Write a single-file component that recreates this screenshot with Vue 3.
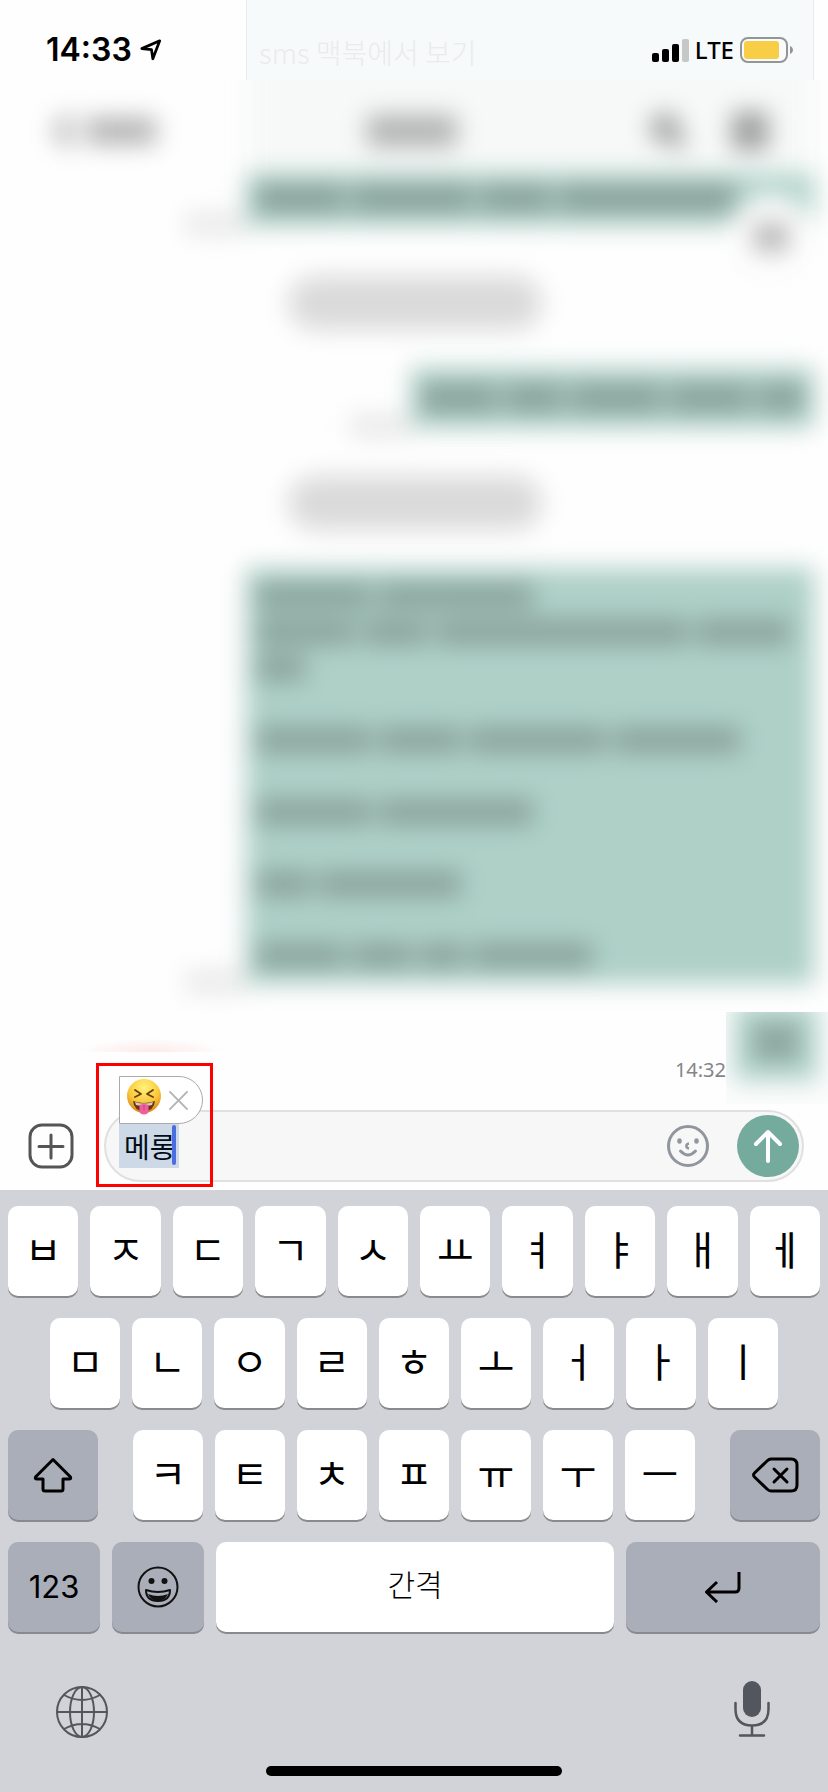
<script setup>
import { ref } from 'vue'

const draft = ref('메롱')

const rowOne = ['ㅂ', 'ㅈ', 'ㄷ', 'ㄱ', 'ㅅ', 'ㅛ', 'ㅕ', 'ㅑ', 'ㅐ', 'ㅔ']
const rowTwo = ['ㅁ', 'ㄴ', 'ㅇ', 'ㄹ', 'ㅎ', 'ㅗ', 'ㅓ', 'ㅏ', 'ㅣ']
const rowThree = ['ㅋ', 'ㅌ', 'ㅊ', 'ㅍ', 'ㅠ', 'ㅜ', 'ㅡ']

// Word lengths of each obscured line, as a percentage of the bubble's text width.
const firstMessage = [[16, 22, 13, 32]]
const shortMessage = [[20, 15, 24, 21, 12]]
const longMessage = [
  [21, 28],
  [18, 12, 46, 17],
  [9],
  [],
  [21, 15, 25, 23],
  [],
  [21, 28],
  [],
  [10, 26],
  [],
  [16, 11, 8, 22],
]
</script>

<template>
  <main class="phone">
    <div class="status-sheet"></div>
    <header class="status">
      <div class="clock">
        <span class="time">14:33</span>
        <svg class="locate" viewBox="0 0 24 24" aria-hidden="true">
          <path d="M2 10.500 21.500 2 14 21.500 12.500 11.500Z" fill="none" stroke="#000" stroke-width="3" stroke-linejoin="round" />
        </svg>
      </div>
      <p class="ghost-text">sms 맥북에서 보기</p>
      <div class="signals">
        <svg class="bars" viewBox="0 0 37 24" aria-hidden="true">
          <rect x="0" y="15" width="7" height="9" rx="2" />
          <rect x="10" y="11" width="7" height="13" rx="2" />
          <rect x="20" y="6" width="7" height="18" rx="2" />
          <rect x="30" y="1" width="7" height="23" rx="2" fill="#c6c8c8" />
        </svg>
        <span class="lte">LTE</span>
        <svg class="battery" viewBox="0 0 54 26" aria-hidden="true">
          <rect x="1" y="1" width="46" height="24" rx="7" fill="#fafcfc" stroke="#939596" stroke-width="2" />
          <rect x="4" y="4" width="35" height="18" rx="3" fill="#f8ce46" />
          <path d="M50 9c4 2 4 6 0 8Z" fill="#939596" />
        </svg>
      </div>
    </header>

    <section class="history" aria-hidden="true">
      <div class="soft">
        <div class="nav">
          <div class="nav-sheet"></div>
          <div class="back">
            <svg viewBox="0 0 20 36"><path d="M17 3 4 18l13 15" fill="none" stroke="#555" stroke-width="5" /></svg>
            <i></i>
          </div>
          <i class="title"></i>
          <div class="tools">
            <svg viewBox="0 0 40 40"><circle cx="17" cy="17" r="11" fill="#ccc" stroke="#777" stroke-width="6" /><path d="m25 25 11 12" stroke="#777" stroke-width="7" /></svg>
            <svg viewBox="0 0 40 40"><path d="M2 7h36M2 20h36M2 33h36" stroke="#666" stroke-width="8" /></svg>
          </div>
        </div>

        <div class="message first">
          <i class="stamp"></i>
          <div class="bubble wide">
            <div v-for="(line, n) in firstMessage" :key="n" class="line">
              <i v-for="(w, m) in line" :key="m" :style="{ width: w + '%' }"></i>
            </div>
          </div>
          <div class="jump"><i></i></div>
        </div>
        <div class="pill"></div>
        <div class="message short">
          <i class="stamp"></i>
          <div class="bubble medium">
            <div v-for="(line, n) in shortMessage" :key="n" class="line">
              <i v-for="(w, m) in line" :key="m" :style="{ width: w + '%' }"></i>
            </div>
          </div>
        </div>
        <div class="pill"></div>
        <div class="message">
          <i class="stamp"></i>
          <div class="bubble wide">
            <div v-for="(line, n) in longMessage" :key="n" class="line">
              <i v-for="(w, m) in line" :key="m" :style="{ width: w + '%' }"></i>
            </div>
          </div>
        </div>
      </div>
    </section>

    <section class="latest">
      <div class="glow"></div>
      <time class="sent-at">14:32</time>
      <div class="patch" aria-hidden="true">
        <div class="mini"><i></i></div>
      </div>
    </section>

    <form class="composer" @submit.prevent>
      <button type="button" class="plus" aria-label="첨부">
        <svg viewBox="0 0 46 46">
          <rect x="2" y="2" width="42" height="42" rx="12" fill="none" stroke="#555" stroke-width="3" />
          <path d="M23 12v23M11 23.500h24" stroke="#555" stroke-width="3" stroke-linecap="round" />
        </svg>
      </button>
      <div class="field">
        <div class="entry">
          <span class="marked"></span>
          <input v-model="draft" type="text" aria-label="메시지 입력" />
          <span class="caret"></span>
          <div class="suggest">
            <button type="button" aria-label="이모티콘 넣기">
              <svg class="tongue" viewBox="0 0 36 38">
                <defs>
                  <radialGradient id="face" cx="50%" cy="25%" r="75%">
                    <stop offset="0" stop-color="#fff27a" />
                    <stop offset="0.600" stop-color="#f9c93c" />
                    <stop offset="1" stop-color="#dd8518" />
                  </radialGradient>
                </defs>
                <circle cx="18" cy="18" r="17" fill="url(#face)" />
                <path d="M9 12l6 4-6 3M27 12l-6 4 6 3" fill="none" stroke="#6b3d0c" stroke-width="1.800" stroke-linecap="round" stroke-linejoin="round" />
                <path d="M7 23q11 4 22 0-1 10-11 10T7 23Z" fill="#6a3512" />
                <path d="M9 24q9 3 18 0l-1 3q-8 2-16 0Z" fill="#fff" opacity="0.750" />
                <path d="M13.500 27q4.500-2 9 0v5q0 4.500-4.500 4.500T13.500 32Z" fill="#ee5fa0" />
                <path d="M18 27v5" stroke="#c93c7d" stroke-width="1" />
              </svg>
            </button>
            <button type="button" aria-label="닫기">
              <svg class="close" viewBox="0 0 22 22"><path d="m1.500 1.500 19 19m0-19-19 19" stroke="#b4b4b4" stroke-width="2" /></svg>
            </button>
          </div>
        </div>
        <button type="button" class="sticker" aria-label="이모티콘">
          <svg viewBox="0 0 42 42" fill="none" stroke="#91969e">
            <circle cx="21" cy="21" r="19.500" stroke-width="3" />
            <rect x="11" y="14" width="3" height="4" rx="1.500" stroke-width="1.500" fill="#91969e" />
            <rect x="28" y="14" width="3" height="4" rx="1.500" stroke-width="1.500" fill="#91969e" />
            <path d="M22 18.500c-3.500.5-3.500 4.500 0 5" stroke-width="2.500" />
            <path d="M13.500 26q7.500 8 15 0" stroke-width="3" stroke-linecap="round" />
          </svg>
        </button>
        <button type="submit" class="send" aria-label="보내기">
          <svg viewBox="0 0 30 34"><path d="M15 32V3M3 15 15 3l12 12" fill="none" stroke="#fff" stroke-width="4" stroke-linecap="round" stroke-linejoin="round" /></svg>
        </button>
      </div>
      <div class="callout"></div>
    </form>

    <section class="keyboard">
      <div class="keys">
        <div class="row"><button v-for="k in rowOne" :key="k" type="button" class="key">{{ k }}</button></div>
        <div class="row inset"><button v-for="k in rowTwo" :key="k" type="button" class="key">{{ k }}</button></div>
        <div class="row split">
          <button type="button" class="key grey side" aria-label="shift">
            <svg class="shift" viewBox="0 0 40 36"><path d="M20 2.500 37.500 20q.8 2-1.500 2h-6v10q0 2-2 2H12q-2 0-2-2V22H4q-2.300 0-1.500-2Z" fill="none" stroke="#000" stroke-width="3" stroke-linejoin="round" /></svg>
          </button>
          <div class="row letters"><button v-for="k in rowThree" :key="k" type="button" class="key">{{ k }}</button></div>
          <button type="button" class="key grey side" aria-label="지우기">
            <svg class="erase" viewBox="0 0 48 36" fill="none" stroke="#000" stroke-width="3" stroke-linecap="round" stroke-linejoin="round">
              <path d="M20 2h20q6 0 6 6v20q0 6-6 6H20q-2 0-4-2L3.500 20q-2-2 0-4L16 4q2-2 4-2Z" />
              <path d="m23 12 13 13m0-13L23 25" />
            </svg>
          </button>
        </div>
        <div class="row">
          <button type="button" class="key grey mode">123</button>
          <button type="button" class="key grey mode" aria-label="이모지">
            <svg class="grin" viewBox="0 0 42 42">
              <circle cx="21" cy="21" r="19.500" fill="none" stroke="#111" stroke-width="2" />
              <circle cx="14.500" cy="15" r="3" fill="#111" />
              <circle cx="27.500" cy="15" r="3" fill="#111" />
              <path d="M9 24q12 4 24 0 0 11-12 11T9 24Z" fill="#aaaeb9" stroke="#111" stroke-width="2" stroke-linejoin="round" />
              <path d="M11 28q10 4 20 0-3 7-10 7t-10-7Z" fill="#111" />
            </svg>
          </button>
          <button type="button" class="key space">간격</button>
          <button type="button" class="key grey enter" aria-label="줄바꿈">
            <svg class="return" viewBox="0 0 38 32"><path d="M35 1v16q0 4-4 4H3M13 11 2.500 21 13 31" fill="none" stroke="#000" stroke-width="3" stroke-linejoin="round" /></svg>
          </button>
        </div>
      </div>
      <div class="dock">
        <button type="button" aria-label="키보드 전환">
          <svg class="globe" viewBox="0 0 52 52" fill="none" stroke="#54565b" stroke-width="2">
            <circle cx="26" cy="26" r="25" />
            <ellipse cx="26" cy="26" rx="12" ry="25" />
            <path d="M26 1v50M1 26h50M8 9q18 10 36 0M8 43q18-10 36 0" />
          </svg>
        </button>
        <button type="button" aria-label="음성 입력">
          <svg class="mic" viewBox="0 0 36 56">
            <rect x="9" y="0" width="18" height="36" rx="9" fill="#54565d" />
            <path d="M1.500 22v6q0 16.500 16.500 16.500T34.500 28v-6M18 45v9M6 54.500h24" fill="none" stroke="#54565b" stroke-width="2.500" stroke-linecap="round" />
          </svg>
        </button>
      </div>
      <div class="home"></div>
    </section>
  </main>
</template>

<style>
body {
  margin: 0;
  background: #d1d3d9;
}
</style>

<style scoped>
* {
  box-sizing: border-box;
}
.phone {
  position: relative;
  background: #fefefe;
  font-family: Inter, 'Noto Sans CJK KR', sans-serif;
  color: #000;
}
button {
  padding: 0;
  border: 0;
  background: none;
  color: inherit;
  font: inherit;
}
svg {
  display: block;
}
i {
  display: block;
}

/* Status bar */
.status-sheet {
  position: absolute;
  top: 0;
  right: 14px;
  width: calc(100% - 260px);
  height: 80px;
  border: solid #e9ebed;
  border-width: 0 1px;
  background: #f6fafb;
}
.status {
  position: relative;
  display: flex;
  align-items: center;
  height: 80px;
  padding: 20px 34px 0 46px;
}
.clock {
  display: flex;
  align-items: center;
  gap: 8px;
  width: 213px;
}
.time {
  font-size: 32px;
  font-weight: 600;
  line-height: 40px;
}
.locate {
  width: 22px;
  height: 22px;
}
.ghost-text {
  flex: 1;
  margin: 0;
  padding-top: 4px;
  color: #ebebeb;
  font-family: 'Noto Sans CJK KR', sans-serif;
  font-size: 28px;
  font-weight: 300;
  line-height: 40px;
}
.signals {
  display: flex;
  align-items: center;
  gap: 6px;
}
.bars {
  width: 37px;
  height: 24px;
}
.lte {
  font-family: 'Noto Sans', sans-serif;
  font-size: 24px;
  font-weight: 500;
  line-height: 32px;
}
.battery {
  width: 54px;
  height: 26px;
}

/* Obscured conversation */
.history {
  height: 932px;
  overflow: hidden;
}
.soft {
  display: flex;
  flex-direction: column;
  filter: blur(12px);
}
.nav {
  position: relative;
  display: flex;
  align-items: center;
  justify-content: space-between;
  height: 94px;
  padding: 8px 58px 0 54px;
}
.nav-sheet {
  position: absolute;
  top: -40px;
  right: 14px;
  bottom: 0;
  width: calc(100% - 260px);
  background: #f6f9f8;
}
.back {
  position: relative;
  display: flex;
  flex: 1;
  align-items: center;
  gap: 12px;
}
.back svg {
  width: 20px;
  height: 36px;
}
.back i {
  width: 70px;
  height: 26px;
  background: #b0b0b0;
}
.title {
  position: relative;
  width: 90px;
  height: 32px;
  background: #b2b3b3;
}
.tools {
  position: relative;
  display: flex;
  flex: 1;
  justify-content: flex-end;
  gap: 42px;
}
.tools svg {
  width: 40px;
  height: 40px;
}
.message {
  position: relative;
  display: flex;
  align-items: flex-end;
  justify-content: flex-end;
  padding-right: 14px;
}
.stamp {
  width: 60px;
  height: 20px;
  margin-bottom: -8px;
  background: #e6e6e6;
}
.bubble {
  padding: 10px;
  background: #aed0c7;
}
.wide {
  width: calc(100% - 246px);
}
.medium {
  width: calc(100% - 411px);
}
.line {
  display: flex;
  align-items: center;
  gap: 8px;
  height: 36px;
}
.line i {
  height: 26px;
  background: #8aa39c;
}
.first {
  margin-bottom: 50px;
}
.first .bubble {
  padding: 6px 10px 10px;
}
.first .line i,
.short .line i {
  height: 30px;
}
.short {
  margin-bottom: 48px;
}
.short .bubble {
  padding: 12px 10px;
}
.jump {
  position: absolute;
  top: 20px;
  right: 14px;
  display: grid;
  place-items: center;
  width: 86px;
  height: 86px;
  border-radius: 50%;
  background: #fcfcfc;
}
.jump i {
  width: 34px;
  height: 28px;
  background: #b4b4b4;
}
.pill {
  width: 254px;
  height: 54px;
  margin-bottom: 38px;
  margin-left: calc(35% - 2px);
  border-radius: 27px;
  background: #dadada;
}

/* Latest message */
.latest {
  position: relative;
  display: flex;
  align-items: center;
  justify-content: flex-end;
  height: 92px;
}
.glow {
  position: absolute;
  bottom: 52px;
  left: 76px;
  width: 150px;
  height: 14px;
  background: radial-gradient(ellipse at 50% 100%, #fdeaea, #fefefe00 70%);
}
.sent-at {
  padding-top: 24px;
  color: #858585;
  font-family: 'Noto Sans', sans-serif;
  font-size: 20px;
  line-height: 28px;
}
.patch {
  width: 102px;
  height: 92px;
  overflow: hidden;
  background: #fbfcfc;
}
.mini {
  display: grid;
  place-items: center;
  width: 82px;
  height: 76px;
  margin-top: -8px;
  margin-left: 9px;
  background: #aed0c7;
  filter: blur(12px);
}
.mini i {
  width: 44px;
  height: 34px;
  background: #8ba49c;
}

/* Composer */
.composer {
  position: relative;
  display: flex;
  align-items: center;
  gap: 30px;
  padding: 6px 24px 8px 28px;
  background: #fefefe;
}
.plus svg {
  width: 46px;
  height: 46px;
}
.field {
  display: flex;
  flex: 1;
  align-items: center;
  height: 72px;
  padding: 0 3px 0 13px;
  border: 2px solid #e0e0e0;
  border-radius: 36px;
  background: #f7f7f7;
}
.entry {
  position: relative;
  flex: 1;
}
.marked {
  position: absolute;
  top: 0;
  left: 0;
  width: 60px;
  height: 44px;
  background: #cdd9e7;
}
.entry input {
  position: relative;
  display: block;
  width: 100%;
  height: 44px;
  padding: 0 0 0 5px;
  border: 0;
  outline: 0;
  background: transparent;
  color: #020d1a;
  font-family: 'Noto Sans CJK KR', sans-serif;
  font-size: 28px;
}
.caret {
  position: absolute;
  top: 1px;
  left: 53px;
  width: 4px;
  height: 40px;
  border-radius: 2px;
  background: #4a6de0;
}
.suggest {
  position: absolute;
  bottom: 44px;
  left: 0;
  display: flex;
  gap: 6px;
  width: 84px;
  height: 48px;
  padding: 1px 0 0 6px;
  border: 1px solid #aaa;
  border-radius: 0 24px 24px 0;
  background: #fff;
}
.suggest button {
  display: flex;
}
.tongue {
  width: 36px;
  height: 38px;
}
.close {
  width: 21px;
  height: 21px;
  margin-top: 12px;
}
.sticker svg {
  width: 42px;
  height: 42px;
}
.send {
  display: grid;
  place-items: center;
  width: 62px;
  height: 62px;
  margin-left: 28px;
  border-radius: 50%;
  background: #75ab9d;
}
.send svg {
  width: 30px;
  height: 34px;
}
.callout {
  position: absolute;
  bottom: 3px;
  left: 96px;
  width: 117px;
  height: 124px;
  border: 3px solid #f00;
  pointer-events: none;
}

/* Keyboard */
.keyboard {
  padding: 16px 8px;
  background: #d1d3d9;
}
.keys {
  display: flex;
  flex-direction: column;
  gap: 22px;
}
.row {
  display: flex;
  gap: 12px;
}
.inset {
  padding: 0 42px;
}
.split {
  gap: 35px;
}
.letters {
  flex: 1;
}
.key {
  display: flex;
  flex: 1;
  align-items: center;
  justify-content: center;
  min-width: 0;
  height: 90px;
  padding-bottom: 6px;
  border-radius: 10px;
  background: #fff;
  box-shadow: 0 2px 0 #898a8d;
  font-family: 'Noto Sans CJK KR', sans-serif;
  font-size: 40px;
  font-weight: 400;
  line-height: 44px;
}
.grey {
  padding-bottom: 0;
  background: #aaaeb9;
}
.side {
  flex: 0 0 90px;
}
.mode {
  flex: 0 0 92px;
  font-family: Inter, sans-serif;
  font-size: 31px;
}
.space {
  padding-bottom: 8px;
  font-size: 30px;
  font-weight: 300;
}
.enter {
  flex: 0 0 194px;
}
.shift {
  width: 40px;
  height: 36px;
}
.erase {
  width: 48px;
  height: 36px;
}
.grin {
  width: 42px;
  height: 42px;
}
.return {
  width: 38px;
  height: 32px;
}
.dock {
  display: flex;
  align-items: flex-end;
  justify-content: space-between;
  padding: 48px 50px 28px 48px;
}
.globe {
  width: 52px;
  height: 52px;
}
.mic {
  width: 36px;
  height: 58px;
}
.home {
  width: 296px;
  height: 10px;
  margin: 0 auto;
  border-radius: 5px;
  background: #000;
}
</style>
